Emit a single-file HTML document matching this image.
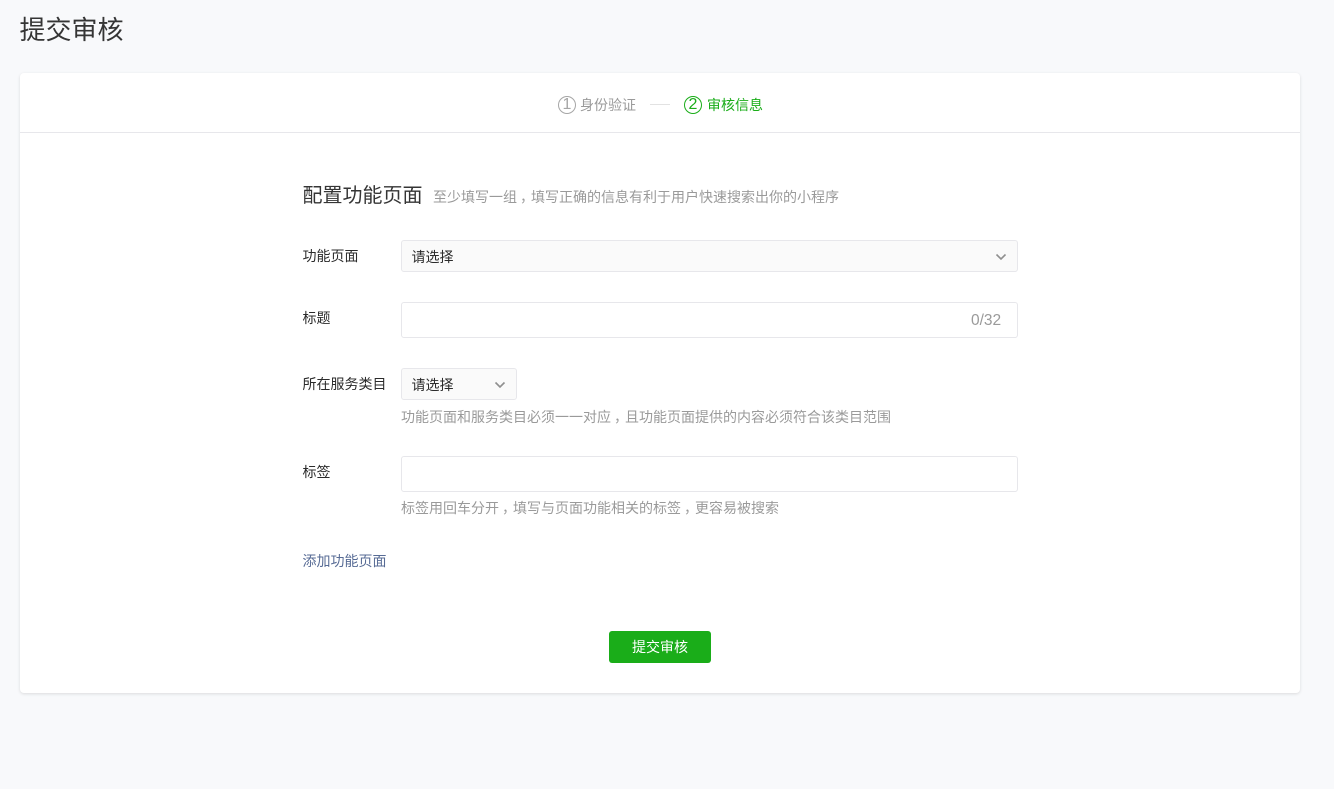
<!DOCTYPE html>
<html lang="zh">
<head>
<meta charset="utf-8">
<title>提交审核</title>
<style>
html,body{margin:0;padding:0;width:1334px;height:789px;overflow:hidden;background:#f8f9fb;}
body{position:relative;font-family:"Liberation Sans","Noto Sans CJK SC",sans-serif;color:#2b2b2b;font-size:14px;}
.t{position:absolute;white-space:nowrap;line-height:20px;}
.card{position:absolute;left:20px;top:73px;width:1280px;height:620px;background:#fff;border-radius:4px;box-shadow:0 1px 3px rgba(0,0,0,.12);}
.line{position:absolute;left:20px;top:132px;width:1280px;height:1px;background:#e7e7eb;}
.box{position:absolute;box-sizing:border-box;border:1px solid #e7e7eb;border-radius:3px;background:#fff;}
.sel{background:#fafafa;}
.hint{color:#9a9a9a;}
.c{position:relative;left:3px;}
.num{position:absolute;box-sizing:border-box;width:18px;height:18px;border-radius:50%;border:1px solid #a6a6a6;color:#a6a6a6;font-size:16px;line-height:16px;text-align:center;}
svg{position:absolute;}
</style>
</head>
<body>
<div class="t" style="left:19.5px;top:12px;font-size:26px;line-height:36px;color:#353535;">提交审核</div>
<div class="card"></div>
<div class="line"></div>

<div class="num" style="left:558px;top:96px;">1</div>
<div class="t" style="left:580px;top:95px;color:#9a9a9a;">身份验证</div>
<div style="position:absolute;left:650px;top:104px;width:20px;height:1px;background:#e2e2e2;"></div>
<div class="num" style="left:684px;top:96px;border-color:#1aad19;color:#1aad19;">2</div>
<div class="t" style="left:707px;top:95px;color:#1aad19;">审核信息</div>

<div class="t" style="left:302.5px;top:182px;font-size:20px;line-height:28px;color:#353535;">配置功能页面</div>
<div class="t hint" style="left:433px;top:187px;">至少填写一组<span class="c">，</span>填写正确的信息有利于用户快速搜索出你的小程序</div>

<div class="t" style="left:302.5px;top:246px;">功能页面</div>
<div class="box sel" style="left:401px;top:240px;width:617px;height:32px;"></div>
<div class="t" style="left:411.5px;top:247px;">请选择</div>
<svg style="left:995px;top:253px;" width="12" height="8" viewBox="0 0 12 8"><path d="M1.5 1.5 L6 6 L10.5 1.5" fill="none" stroke="#8f8f8f" stroke-width="1.6"/></svg>

<div class="t" style="left:302.5px;top:308px;">标题</div>
<div class="box" style="left:401px;top:302px;width:617px;height:36px;"></div>
<div class="t" style="left:971px;top:311px;color:#9a9a9a;font-size:15.5px;">0/32</div>

<div class="t" style="left:302.5px;top:374px;">所在服务类目</div>
<div class="box sel" style="left:401px;top:368px;width:116px;height:32px;"></div>
<div class="t" style="left:411.5px;top:375px;">请选择</div>
<svg style="left:494px;top:381px;" width="12" height="8" viewBox="0 0 12 8"><path d="M1.5 1.5 L6 6 L10.5 1.5" fill="none" stroke="#8f8f8f" stroke-width="1.6"/></svg>
<div class="t hint" style="left:401px;top:407px;">功能页面和服务类目必须一一对应<span class="c">，</span>且功能页面提供的内容必须符合该类目范围</div>

<div class="t" style="left:302.5px;top:462px;">标签</div>
<div class="box" style="left:401px;top:456px;width:617px;height:36px;"></div>
<div class="t hint" style="left:401px;top:498px;">标签用回车分开<span class="c">，</span>填写与页面功能相关的标签<span class="c">，</span>更容易被搜索</div>

<div class="t" style="left:302.5px;top:551px;color:#576b95;">添加功能页面</div>

<div style="position:absolute;left:609px;top:631px;width:102px;height:32px;background:#1aad19;border-radius:3px;color:#fff;text-align:center;line-height:33px;font-size:14px;">提交审核</div>
</body>
</html>
